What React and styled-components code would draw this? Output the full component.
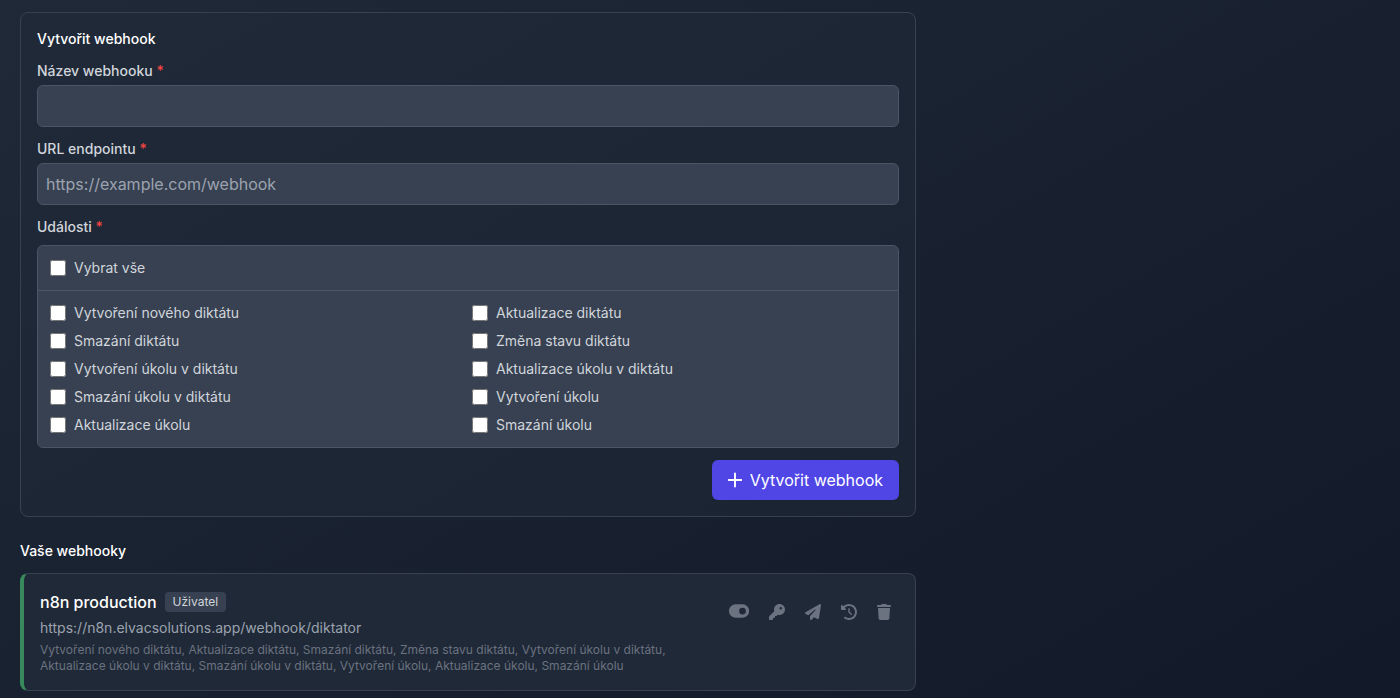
import React, { useState } from "react";
import styled, { createGlobalStyle } from "styled-components";
import {
  FaClockRotateLeft,
  FaKey,
  FaPaperPlane,
  FaToggleOn,
  FaTrash,
} from "react-icons/fa6";

const events = [
  "Vytvoření nového diktátu",
  "Aktualizace diktátu",
  "Smazání diktátu",
  "Změna stavu diktátu",
  "Vytvoření úkolu v diktátu",
  "Aktualizace úkolu v diktátu",
  "Smazání úkolu v diktátu",
  "Vytvoření úkolu",
  "Aktualizace úkolu",
  "Smazání úkolu",
];

const webhooks = [
  {
    id: 1,
    name: "n8n production",
    scope: "Uživatel",
    url: "https://n8n.elvacsolutions.app/webhook/diktator",
    events: events,
  },
];

const PlusIcon = () => (
  <svg viewBox="0 0 14 16" fill="none" stroke="currentColor">
    <path d="M7 1.4v13.2M.6 8h12.8" strokeWidth="1.9" strokeLinecap="round" />
  </svg>
);

const App = () => {
  const [name, setName] = useState("");
  const [url, setUrl] = useState("");
  const [selected, setSelected] = useState([]);

  const toggleEvent = (event) => {
    setSelected((prev) =>
      prev.includes(event) ? prev.filter((e) => e !== event) : [...prev, event]
    );
  };

  const toggleAll = () => {
    setSelected(selected.length === events.length ? [] : events);
  };

  return (
    <Page>
      <GlobalStyle />
      <Content>
        <Form onSubmit={(e) => e.preventDefault()}>
          <Heading>Vytvořit webhook</Heading>
          <Field>
            <Label htmlFor="name">
              Název webhooku <Required>*</Required>
            </Label>
            <Input
              id="name"
              value={name}
              onChange={(e) => setName(e.target.value)}
            />
          </Field>
          <Field>
            <Label htmlFor="url">
              URL endpointu <Required>*</Required>
            </Label>
            <Input
              id="url"
              placeholder="https://example.com/webhook"
              value={url}
              onChange={(e) => setUrl(e.target.value)}
            />
          </Field>
          <Field>
            <Label as="div">
              Události <Required>*</Required>
            </Label>
            <EventBox>
              <SelectAll>
                <Option>
                  <Checkbox
                    checked={selected.length === events.length}
                    onChange={toggleAll}
                  />
                  Vybrat vše
                </Option>
              </SelectAll>
              <EventGrid>
                {events.map((event) => (
                  <Option key={event}>
                    <Checkbox
                      checked={selected.includes(event)}
                      onChange={() => toggleEvent(event)}
                    />
                    {event}
                  </Option>
                ))}
              </EventGrid>
            </EventBox>
          </Field>
          <Footer>
            <SubmitButton type="submit">
              <PlusIcon />
              Vytvořit webhook
            </SubmitButton>
          </Footer>
        </Form>

        <Section>
          <Heading>Vaše webhooky</Heading>
          {webhooks.map((hook) => (
            <Card key={hook.id}>
              <Info>
                <TitleRow>
                  <Name>{hook.name}</Name>
                  <Badge>{hook.scope}</Badge>
                </TitleRow>
                <Url>{hook.url}</Url>
                <EventList>{hook.events.join(", ")}</EventList>
              </Info>
              <Actions>
                <ToggleButton title="Deaktivovat">
                  <FaToggleOn />
                </ToggleButton>
                <IconButton title="Klíč">
                  <FaKey />
                </IconButton>
                <IconButton title="Otestovat">
                  <FaPaperPlane />
                </IconButton>
                <IconButton title="Historie">
                  <FaClockRotateLeft />
                </IconButton>
                <IconButton $ratio={0.875} title="Smazat">
                  <FaTrash />
                </IconButton>
              </Actions>
            </Card>
          ))}
        </Section>
      </Content>
    </Page>
  );
};

const GlobalStyle = createGlobalStyle`
  * {
    box-sizing: border-box;
  }
  body {
    margin: 0;
    overflow: hidden;
    font-family: Inter, "Liberation Sans", sans-serif;
  }
  button,
  input {
    font-family: inherit;
  }
`;

const Page = styled.div`
  height: 100vh;
  overflow: hidden;
  padding: 12px 20px;
  background: linear-gradient(to bottom right, #1f2937, #111827) 0 0 / 100%
    810px no-repeat;
`;
const Content = styled.div`
  width: 896px;
`;
const Form = styled.form`
  display: flex;
  flex-direction: column;
  gap: 12px;
  padding: 16px;
  border: 1px solid #374151;
  border-radius: 8px;
  background-color: rgba(31, 41, 55, 0.5);
`;
const Heading = styled.h4`
  margin: 0;
  font-size: 14px;
  font-weight: 500;
  line-height: 20px;
  color: white;
`;
const Field = styled.div`
  display: flex;
  flex-direction: column;
`;
const Label = styled.label`
  font-size: 14px;
  font-weight: 500;
  line-height: 20px;
  color: #d1d5db;
`;
const Required = styled.span`
  color: #ef4444;
`;
const Input = styled.input`
  width: 100%;
  height: 42px;
  margin-top: 4px;
  padding: 8px;
  border: 1px solid #4b5563;
  border-radius: 6px;
  background-color: #374151;
  color: white;
  font-size: 16px;
  line-height: 24px;
  &::placeholder {
    color: #9ca3af;
  }
`;
const EventBox = styled.div`
  margin-top: 8px;
  border: 1px solid #4b5563;
  border-radius: 6px;
  background-color: #374151;
`;
const SelectAll = styled.div`
  padding: 12px;
  border-bottom: 1px solid #4b5563;
`;
const EventGrid = styled.div`
  display: grid;
  grid-template-columns: 1fr 1fr;
  gap: 8px;
  padding: 12px;
`;
const Option = styled.label`
  display: flex;
  align-items: center;
  gap: 8px;
  font-size: 14px;
  line-height: 20px;
  color: #d1d5db;
`;
const Checkbox = styled.input.attrs({ type: "checkbox" })`
  width: 16px;
  height: 16px;
  margin: 0;
`;
const Footer = styled.div`
  display: flex;
  justify-content: flex-end;
`;
const SubmitButton = styled.button`
  display: flex;
  align-items: center;
  gap: 8px;
  height: 40px;
  padding: 8px 16px;
  border: none;
  border-radius: 6px;
  background-color: #4f46e5;
  color: white;
  font-size: 16px;
  font-weight: 400;
  line-height: 24px;
  svg {
    width: 14px;
    height: 16px;
  }
`;
const Section = styled.section`
  display: flex;
  flex-direction: column;
  gap: 12px;
  margin-top: 24px;
`;
const Card = styled.div`
  display: flex;
  align-items: flex-start;
  justify-content: space-between;
  padding: 16px;
  border: 1px solid #374151;
  border-left: 4px solid #38895c;
  border-radius: 8px;
  background-color: #1f2937;
`;
const Info = styled.div`
  flex: 1;
  min-width: 0;
`;
const TitleRow = styled.div`
  display: flex;
  align-items: center;
  gap: 8px;
`;
const Name = styled.span`
  font-size: 16px;
  font-weight: 500;
  line-height: 24px;
  color: white;
`;
const Badge = styled.span`
  padding: 2px 8px;
  border-radius: 4px;
  background-color: #374151;
  color: #d1d5db;
  font-size: 12px;
  line-height: 16px;
`;
const Url = styled.p`
  margin: 4px 0 0;
  font-size: 14px;
  line-height: 20px;
  color: #9ca3af;
`;
const EventList = styled.p`
  margin: 4px 0 0;
  font-size: 12px;
  line-height: 16px;
  color: #6b7280;
`;
const Actions = styled.div`
  display: flex;
  align-items: center;
  gap: 4px;
  height: 44px;
`;
const IconButton = styled.button`
  display: flex;
  flex-shrink: 0;
  padding: 8px;
  border: none;
  background: none;
  color: #6b7280;
  font-size: 16px;
  svg {
    width: ${(props) => props.$ratio || 1}em;
    height: 1em;
  }
`;
const ToggleButton = styled(IconButton)`
  padding-bottom: 10px;
  font-size: 18px;
  svg {
    width: 1.125em;
  }
`;

export default App;
